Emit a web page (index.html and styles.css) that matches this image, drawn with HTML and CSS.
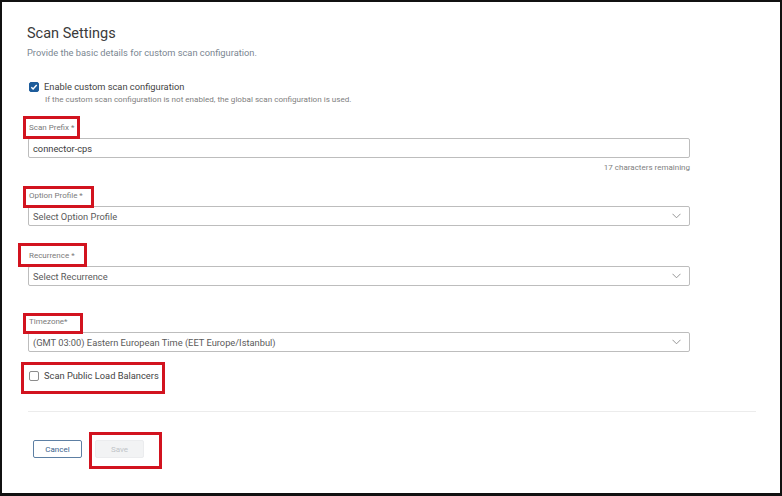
FILE: index.html
```html
<!DOCTYPE html>
<html>
<head>
<meta charset="utf-8">
<link rel="stylesheet" href="styles.css">
</head>
<body>
<div class="page">
  <div class="content">
    <h1 class="title">Scan Settings</h1>
    <p class="subtitle">Provide the basic details for custom scan configuration.</p>

    <div class="check-row enable">
      <span class="box checked">
        <svg width="8" height="8" viewBox="0 0 8 8"><path d="M1.3 4.2 L3.1 6 L6.7 2" fill="none" stroke="#fff" stroke-width="1.4"/></svg>
      </span>
      <span class="check-label">Enable custom scan configuration</span>
    </div>
    <p class="help">If the custom scan configuration is not enabled, the global scan configuration is used.</p>

    <div class="field f-prefix">
      <label class="label">Scan Prefix *</label>
      <div class="control"><span class="value">connector-cps</span></div>
      <div class="remaining">17 characters remaining</div>
    </div>

    <div class="field f-option">
      <label class="label">Option Profile *</label>
      <div class="control select"><span class="value">Select Option Profile</span>
        <svg class="chev" width="9" height="6" viewBox="0 0 9 6"><path d="M0.5 0.8 L4.5 4.8 L8.5 0.8" fill="none" stroke="#8a8a8a" stroke-width="0.9"/></svg>
      </div>
    </div>

    <div class="field f-recur">
      <label class="label">Recurrence *</label>
      <div class="control select"><span class="value">Select Recurrence</span>
        <svg class="chev" width="9" height="6" viewBox="0 0 9 6"><path d="M0.5 0.8 L4.5 4.8 L8.5 0.8" fill="none" stroke="#8a8a8a" stroke-width="0.9"/></svg>
      </div>
    </div>

    <div class="field f-tz">
      <label class="label">Timezone*</label>
      <div class="control select"><span class="value">(GMT 03:00) Eastern European Time (EET Europe/Istanbul)</span>
        <svg class="chev" width="9" height="6" viewBox="0 0 9 6"><path d="M0.5 0.8 L4.5 4.8 L8.5 0.8" fill="none" stroke="#8a8a8a" stroke-width="0.9"/></svg>
      </div>
    </div>

    <div class="check-row lb">
      <span class="box"></span>
      <span class="check-label">Scan Public Load Balancers</span>
    </div>

    <div class="divider"></div>

    <div class="actions">
      <button class="btn cancel">Cancel</button>
      <button class="btn save">Save</button>
    </div>
  </div>

  <div class="mark m1"></div>
  <div class="mark m2"></div>
  <div class="mark m3"></div>
  <div class="mark m4"></div>
  <div class="mark m5"></div>
  <div class="mark m6"></div>
</div>
</body>
</html>
```

FILE: styles.css
```css
html, body {
  margin: 0;
  padding: 0;
  background: #fff;
}
body {
  font-family: Roboto, "Liberation Sans", Arial, sans-serif;
  color: #333;
}
.page {
  position: relative;
  width: 782px;
  height: 496px;
  box-sizing: border-box;
  border: 2px solid #111;
  border-bottom-width: 3px;
  overflow: hidden;
  background: #fff;
}
.content {
  padding: 22px 90px 0 25px;
  display: flex;
  flex-direction: column;
}
.title {
  margin: 0;
  font-size: 14.5px;
  font-weight: 400;
  line-height: 20px;
  color: #3a3a3a;
}
.subtitle {
  margin: 2px 0 0 0;
  font-size: 9.3px;
  line-height: 13px;
  color: #7a8691;
}
.check-row {
  display: flex;
  align-items: center;
  gap: 5px;
  height: 12px;
}
.check-row.enable {
  margin: 22px 0 0 2px;
}
.box {
  width: 10px;
  height: 10px;
  box-sizing: border-box;
  border: 1px solid #8c8c8c;
  border-radius: 2px;
  display: flex;
  align-items: center;
  justify-content: center;
  background: #fff;
}
.box.checked {
  background: #1d5c9b;
  border-color: #1d5c9b;
}
.check-label {
  font-size: 9.3px;
  line-height: 12px;
  color: #444;
}
.help {
  margin: 1px 0 0 18px;
  font-size: 8.1px;
  line-height: 11px;
  color: #808080;
}
.field {
  display: flex;
  flex-direction: column;
  margin-left: 1px;
}
.label {
  font-size: 8px;
  line-height: 12px;
  color: #7a7a7a;
  margin-left: 1px;
  margin-bottom: 4px;
}
.control {
  height: 20px;
  box-sizing: border-box;
  border: 1px solid #bdbdbd;
  border-radius: 2px;
  display: flex;
  align-items: center;
  justify-content: space-between;
  padding: 0 8px 0 4px;
}
.value {
  font-size: 9.3px;
  color: #3c3c3c;
}
.select .value {
  color: #5a5a5a;
}
.chev {
  display: block;
}
.remaining {
  align-self: flex-end;
  font-size: 8px;
  line-height: 12px;
  margin-top: 4px;
  color: #808080;
}
.f-prefix { margin-top: 17px; }
.f-option { margin-top: 16px; }
.f-recur { margin-top: 24px; }
.f-tz { margin-top: 30px; }
.check-row.lb {
  margin: 18px 0 0 2px;
}
.divider {
  height: 1px;
  background: #ececec;
  margin: 29px -66px 0 1px;
}
.actions {
  display: flex;
  gap: 13px;
  margin: 28px 0 0 6px;
}
.btn {
  width: 49px;
  height: 18px;
  box-sizing: border-box;
  border-radius: 2px;
  font-family: Roboto, "Liberation Sans", Arial, sans-serif;
  font-size: 8px;
  padding: 0;
}
.cancel {
  background: #fff;
  border: 1px solid #5d7fa3;
  color: #3a628c;
}
.save {
  background: #f2f3f4;
  border: 1px solid #ebecee;
  color: #c0c4c8;
}
.mark {
  position: absolute;
  box-sizing: border-box;
  border: 3px solid #d2131f;
}
.m1 { left: 21px; top: 114px; width: 57px; height: 23px; }
.m2 { left: 21px; top: 184px; width: 71px; height: 22px; }
.m3 { left: 16px; top: 241px; width: 69px; height: 24px; }
.m4 { left: 21px; top: 311px; width: 60px; height: 21px; }
.m5 { left: 19px; top: 360px; width: 144px; height: 32px; }
.m6 { left: 87px; top: 430px; width: 73px; height: 37px; }
```
